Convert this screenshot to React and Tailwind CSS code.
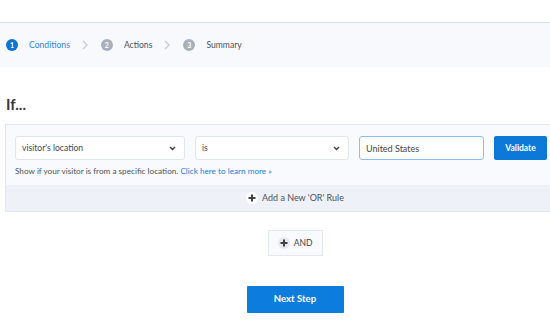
import { useState } from "react";

function Chevron() {
  return (
    <svg width="7" height="10" viewBox="0 0 7 10" className="shrink-0">
      <polyline points="1,1 5,5 1,9" fill="none" stroke="#c6cbd4" strokeWidth="1.4" />
    </svg>
  );
}

function Down() {
  return (
    <svg width="7" height="5" viewBox="0 0 7 5" className="shrink-0">
      <polyline points="1,1 3.5,3.5 6,1" fill="none" stroke="#3d424a" strokeWidth="1.4" />
    </svg>
  );
}

function Plus({ bg }) {
  return (
    <span className={`w-[12px] h-[12px] rounded-full flex items-center justify-center ${bg}`}>
      <svg width="8" height="8" viewBox="0 0 8 8">
        <path d="M4 0.5v7M0.5 4h7" stroke="#3b4049" strokeWidth="2" />
      </svg>
    </span>
  );
}

function Step({ n, label, active }) {
  return (
    <div className="flex items-center gap-[11px]">
      <span
        className={
          active
            ? "w-[12px] h-[12px] rounded-full bg-[#0b74d4] text-white text-[7px] font-bold flex items-center justify-center"
            : "w-[12px] h-[12px] rounded-full bg-[#a9b0bd] text-white text-[7px] font-bold flex items-center justify-center"
        }
      >
        {n}
      </span>
      <span className={active ? "text-[8.6px] text-[#2a86e0]" : "text-[8.6px] text-[#4d525b]"}>
        {label}
      </span>
    </div>
  );
}

export default function App() {
  const [place, setPlace] = useState("United States");

  return (
    <div className="w-[550px] h-[336px] overflow-hidden bg-white font-['Lato',sans-serif]">
      <div className="w-[590px]">
        <div className="h-[22px]" />

        <div className="h-[45px] border-t border-[#dde2ea] bg-[#f8f9fd] flex items-center pl-[6px] gap-[12px]">
          <Step n="1" label="Conditions" active />
          <Chevron />
          <Step n="2" label="Actions" />
          <Chevron />
          <Step n="3" label="Summary" />
        </div>

        <div className="px-[5px]">
          <h1 className="pt-[27px] pl-[1px] text-[15px] font-bold text-[#34383f] leading-[20px]">
            If...
          </h1>

          <div className="mt-[10px] border border-[#e3e7ef] bg-[#f9fafd]">
            <div className="pt-[11px] pl-[9px] pb-[8px]">
              <div className="flex gap-[10px]">
                <div className="w-[170px] h-[24px] bg-white border border-[#e1e5ec] rounded-[3px] flex items-center justify-between pl-[6px] pr-[8px] text-[8.6px] text-[#42474f]">
                  visitor's location
                  <Down />
                </div>
                <div className="w-[154px] h-[24px] bg-white border border-[#e1e5ec] rounded-[3px] flex items-center justify-between pl-[6px] pr-[8px] text-[8.6px] text-[#42474f]">
                  is
                  <Down />
                </div>
                <input
                  value={place}
                  onChange={(e) => setPlace(e.target.value)}
                  className="w-[125px] h-[24px] bg-white border border-[#8fbdf0] rounded-[3px] px-[6px] text-[9px] text-[#42474f] outline-none"
                />
                <button className="w-[53px] h-[24px] bg-[#0c79d8] rounded-[2px] text-white text-[8.5px] font-bold">
                  Validate
                </button>
              </div>

              <p className="mt-[6px] leading-[11px] text-[8.2px] text-[#4d525b]">
                Show if your visitor is from a specific location.{" "}
                <span className="text-[#1a80e0]">Click here to learn more »</span>
              </p>
            </div>

            <div className="h-[26px] bg-[#eef1f7] flex items-center justify-center gap-[4px] text-[9px] text-[#4d525b]">
              <Plus bg="bg-white" />
              Add a New 'OR' Rule
            </div>
          </div>

          <div className="flex justify-center mt-[18px]">
            <button className="w-[55px] h-[26px] bg-[#f9fafd] border border-[#e3e7ef] flex items-center justify-center gap-[4px] text-[8.5px] text-[#3f444c]">
              <Plus bg="bg-[#e6e9ef]" />
              AND
            </button>
          </div>

          <div className="flex justify-center mt-[30px]">
            <button className="w-[97px] h-[27px] bg-[#0d7ddd] rounded-[1px] text-white text-[9.6px] font-bold">
              Next Step
            </button>
          </div>
        </div>
      </div>
    </div>
  );
}
